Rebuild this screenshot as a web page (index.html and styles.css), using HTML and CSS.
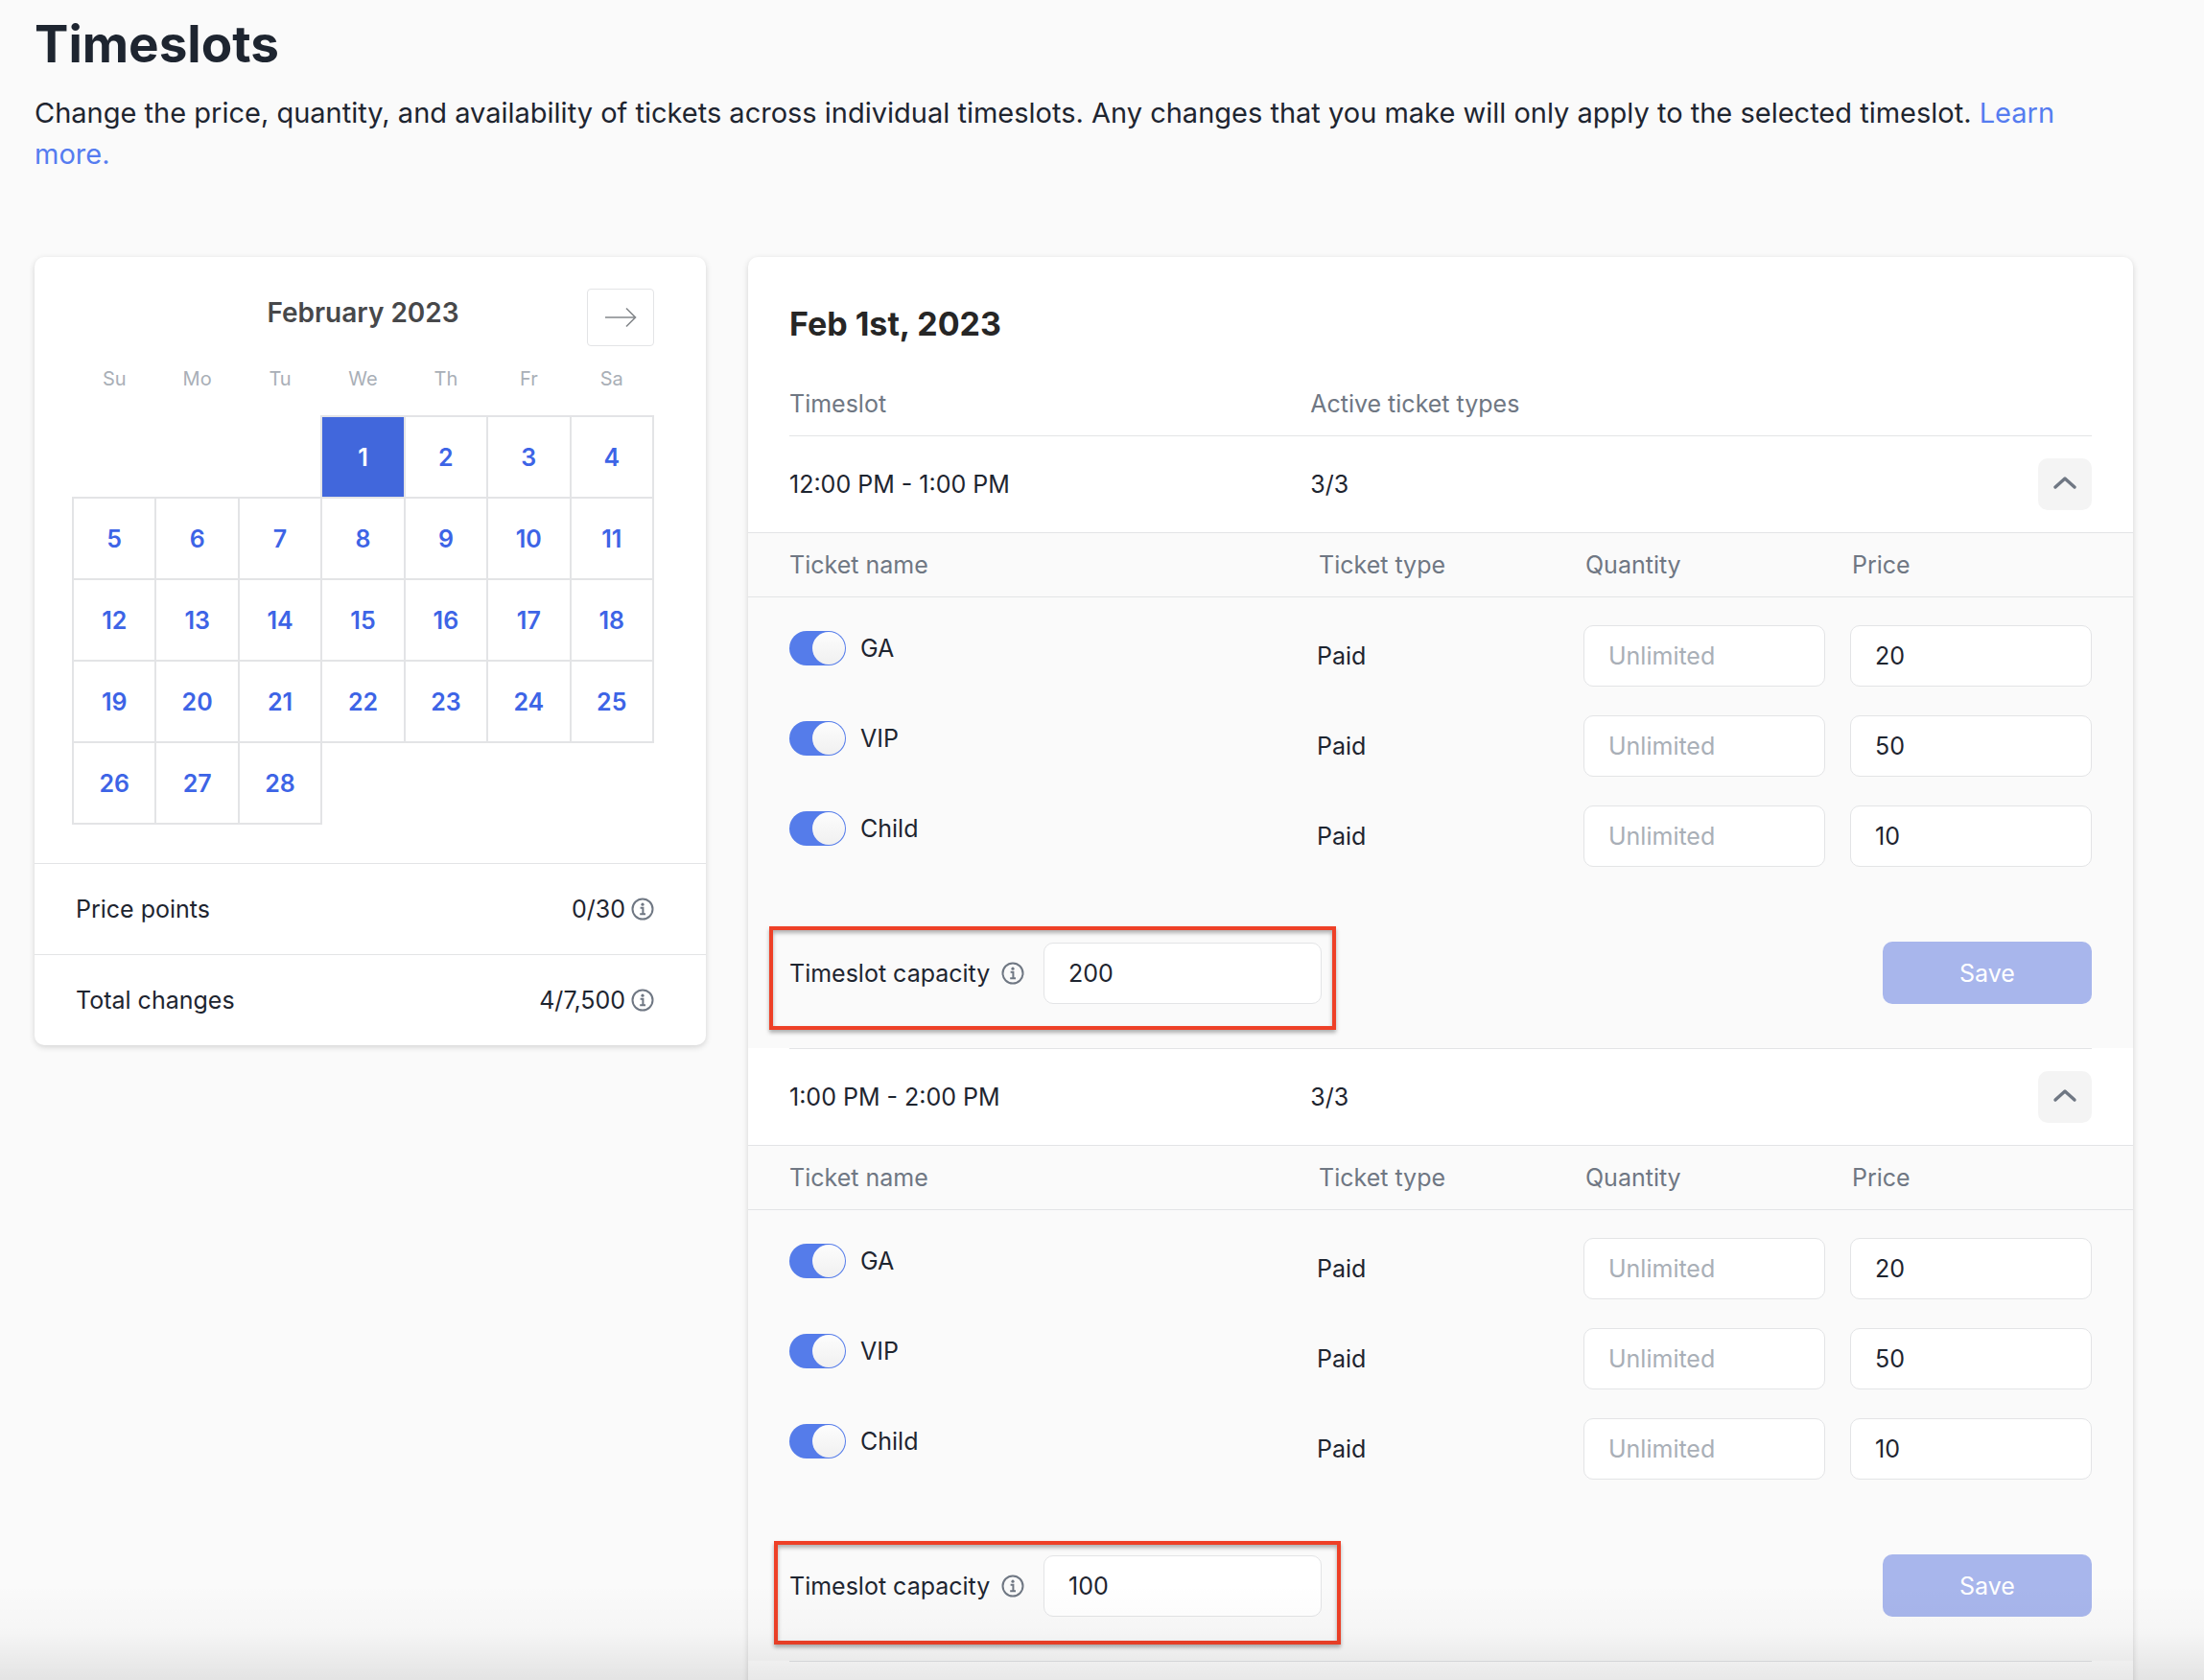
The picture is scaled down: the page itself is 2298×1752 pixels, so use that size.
FILE: index.html
```html
<!DOCTYPE html>
<html lang="en">
<head>
<meta charset="utf-8">
<meta name="viewport" content="width=device-width, initial-scale=1">
<title>Timeslots</title>
<link rel="stylesheet" href="styles.css">
</head>
<body>
<svg class="sprite" aria-hidden="true">
  <symbol id="info" viewBox="0 0 24 24">
    <circle cx="12" cy="12" r="10.5" fill="none" stroke="currentColor" stroke-width="2"/>
    <circle cx="12" cy="7.2" r="1.6" fill="currentColor"/>
    <path d="M9.6 10.8H12.4V17M9.2 17.2H15" fill="none" stroke="currentColor" stroke-width="2"/>
  </symbol>
  <symbol id="chevron-up" viewBox="0 0 26 16">
    <path d="M3 13L13 4L23 13" fill="none" stroke="currentColor" stroke-width="3.4" stroke-linecap="round" stroke-linejoin="round"/>
  </symbol>
</svg>
<main class="page">
  <header class="intro">
    <h1 class="intro-title">Timeslots</h1>
    <p class="intro-text">Change the price, quantity, and availability of tickets across individual timeslots. Any changes that you make will only apply to the selected timeslot. <a class="link" href="#">Learn more.</a></p>
  </header>
  <div class="columns">
    <aside class="card sidebar">
      <div class="month-bar">
        <h2 class="month">February 2023</h2>
        <button class="next" type="button" aria-label="Next month">
          <svg width="34" height="22" viewBox="0 0 34 22" fill="none" stroke="currentColor" stroke-width="1.6"><path d="M1 11H32M23 1.5L32.500 11L23 20.500"/></svg>
        </button>
      </div>
      <table class="calendar">
        <thead><tr><th>Su</th><th>Mo</th><th>Tu</th><th>We</th><th>Th</th><th>Fr</th><th>Sa</th></tr></thead>
        <tbody>
          <tr><td class="blank"></td><td class="blank"></td><td class="blank"></td><td class="selected">1</td><td>2</td><td>3</td><td>4</td></tr>
          <tr><td>5</td><td>6</td><td>7</td><td>8</td><td>9</td><td>10</td><td>11</td></tr>
          <tr><td>12</td><td>13</td><td>14</td><td>15</td><td>16</td><td>17</td><td>18</td></tr>
          <tr><td>19</td><td>20</td><td>21</td><td>22</td><td>23</td><td>24</td><td>25</td></tr>
          <tr><td>26</td><td>27</td><td>28</td><td class="blank"></td><td class="blank"></td><td class="blank"></td><td class="blank"></td></tr>
        </tbody>
      </table>
      <dl class="stats">
        <div class="stat"><dt>Price points</dt><dd>0/30<svg class="info"><use href="#info"/></svg></dd></div>
        <div class="stat"><dt>Total changes</dt><dd>4/7,500<svg class="info"><use href="#info"/></svg></dd></div>
      </dl>
    </aside>

    <section class="card slots">
      <h2 class="date">Feb 1st, 2023</h2>
      <div class="slot-grid slot-head"><span>Timeslot</span><span>Active ticket types</span></div>

      <article class="slot">
        <div class="slot-grid slot-row">
          <span>12:00 PM - 1:00 PM</span><span>3/3</span>
          <button class="collapse" type="button" aria-label="Collapse 12:00 PM timeslot"><svg class="chevron"><use href="#chevron-up"/></svg></button>
        </div>
        <div class="panel">
          <table class="tickets">
            <colgroup><col><col class="col-type"><col class="col-quantity"><col class="col-price"></colgroup>
            <thead><tr><th>Ticket name</th><th>Ticket type</th><th>Quantity</th><th>Price</th></tr></thead>
            <tbody>
              <tr><td><label class="toggle-label"><input class="toggle" type="checkbox" checked>GA</label></td><td>Paid</td><td><input class="field" type="text" placeholder="Unlimited" aria-label="GA quantity"></td><td><input class="field" type="text" value="20" aria-label="GA price"></td></tr>
              <tr><td><label class="toggle-label"><input class="toggle" type="checkbox" checked>VIP</label></td><td>Paid</td><td><input class="field" type="text" placeholder="Unlimited" aria-label="VIP quantity"></td><td><input class="field" type="text" value="50" aria-label="VIP price"></td></tr>
              <tr><td><label class="toggle-label"><input class="toggle" type="checkbox" checked>Child</label></td><td>Paid</td><td><input class="field" type="text" placeholder="Unlimited" aria-label="Child quantity"></td><td><input class="field" type="text" value="10" aria-label="Child price"></td></tr>
            </tbody>
          </table>
          <div class="panel-foot">
            <div class="capacity capacity-first">
              <label class="capacity-label" for="capacity-12">Timeslot capacity</label>
              <svg class="info"><use href="#info"/></svg>
              <input class="field capacity-field" id="capacity-12" type="text" value="200">
            </div>
            <button class="save" type="button">Save</button>
          </div>
        </div>
      </article>

      <article class="slot">
        <div class="slot-grid slot-row">
          <span>1:00 PM - 2:00 PM</span><span>3/3</span>
          <button class="collapse" type="button" aria-label="Collapse 1:00 PM timeslot"><svg class="chevron"><use href="#chevron-up"/></svg></button>
        </div>
        <div class="panel">
          <table class="tickets">
            <colgroup><col><col class="col-type"><col class="col-quantity"><col class="col-price"></colgroup>
            <thead><tr><th>Ticket name</th><th>Ticket type</th><th>Quantity</th><th>Price</th></tr></thead>
            <tbody>
              <tr><td><label class="toggle-label"><input class="toggle" type="checkbox" checked>GA</label></td><td>Paid</td><td><input class="field" type="text" placeholder="Unlimited" aria-label="GA quantity"></td><td><input class="field" type="text" value="20" aria-label="GA price"></td></tr>
              <tr><td><label class="toggle-label"><input class="toggle" type="checkbox" checked>VIP</label></td><td>Paid</td><td><input class="field" type="text" placeholder="Unlimited" aria-label="VIP quantity"></td><td><input class="field" type="text" value="50" aria-label="VIP price"></td></tr>
              <tr><td><label class="toggle-label"><input class="toggle" type="checkbox" checked>Child</label></td><td>Paid</td><td><input class="field" type="text" placeholder="Unlimited" aria-label="Child quantity"></td><td><input class="field" type="text" value="10" aria-label="Child price"></td></tr>
            </tbody>
          </table>
          <div class="panel-foot">
            <div class="capacity capacity-second">
              <label class="capacity-label" for="capacity-1">Timeslot capacity</label>
              <svg class="info"><use href="#info"/></svg>
              <input class="field capacity-field" id="capacity-1" type="text" value="100">
            </div>
            <button class="save" type="button">Save</button>
          </div>
        </div>
      </article>
      <div class="slot-grid slot-row"></div>
    </section>
  </div>
  <div class="fade"></div>
</main>
</body>
</html>
```
FILE: styles.css
```css
:root {
  --ink: #1e2530;
  --muted: #6f7783;
  --faint: #a9afb7;
  --line: #e3e4e6;
  --blue: #3d64e6;
}

*,
*::before,
*::after {
  box-sizing: border-box;
}

body {
  margin: 0;
  background: #fafafa;
  color: var(--ink);
  font: 25px/32px Inter, "Liberation Sans", sans-serif;
}

h1, h2, p, dl, dd {
  margin: 0;
}

button, input {
  margin: 0;
  color: inherit;
  font: inherit;
}

.sprite {
  display: none;
}

/* The page fills the window; the slot list runs on past its lower edge. */
.page {
  position: relative;
  display: flex;
  flex-direction: column;
  height: 100vh;
  padding: 14px 74px 0 36px;
  overflow: hidden;
}

.intro {
  margin-bottom: 86px;
}

.intro-title {
  margin-bottom: 18px;
  font-size: 53px;
  font-weight: 700;
  line-height: 64px;
}

.intro-text {
  font-size: 29px;
  line-height: 43px;
}

.link {
  color: #557cf0;
  text-decoration: none;
}

.columns {
  display: flex;
  flex: none;
  align-items: flex-start;
  gap: 44px;
}

.card {
  background: #fff;
  border-radius: 10px;
  box-shadow: 0 2px 6px rgba(0, 0, 0, 0.16);
}

.info {
  flex: none;
  width: 24px;
  height: 24px;
  color: var(--muted);
}

/* Calendar */
.sidebar {
  flex: 0 0 700px;
}

.month-bar {
  display: grid;
  grid-template-columns: 70px 1fr 70px;
  margin: 33px 54px 0 39px;
}

.month {
  grid-column: 2;
  color: #47484a;
  font-size: 28px;
  font-weight: 600;
  line-height: 50px;
  text-align: center;
}

.next {
  display: flex;
  align-items: center;
  justify-content: center;
  height: 60px;
  padding: 0;
  background: #fff;
  border: 1px solid var(--line);
  border-radius: 4px;
  color: #84888c;
}

.calendar {
  width: 607px;
  margin: 7px 0 0 39px;
  border-collapse: collapse;
  table-layout: fixed;
}

.calendar th {
  height: 66px;
  padding: 0 0 12px;
  color: var(--faint);
  font-size: 20px;
  font-weight: 400;
}

.calendar td {
  height: 85px;
  padding: 0;
  border: 2px solid var(--line);
  color: var(--blue);
  font-weight: 600;
  text-align: center;
}

.calendar .blank {
  border: 0;
}

.calendar .selected {
  background: #4167dc;
  color: #fff;
}

.stats {
  margin-top: 40px;
}

.stat {
  display: flex;
  align-items: center;
  justify-content: space-between;
  height: 95px;
  padding: 0 54px 0 43px;
  border-top: 1px solid var(--line);
}

.stat dd {
  display: flex;
  align-items: center;
  gap: 6px;
}

/* Timeslots */
.slots {
  flex: 1;
  min-width: 0;
}

.date {
  padding: 48px 43px 0;
  color: #262626;
  font-size: 34px;
  font-weight: 700;
  line-height: 44px;
}

.slot-grid {
  display: grid;
  grid-template-columns: 2fr 3fr;
  align-items: center;
  margin: 0 43px;
}

.slot-head {
  height: 94px;
  padding-top: 28px;
  color: var(--muted);
}

.slot-row {
  grid-template-columns: 40% 1fr 56px;
  height: 101px;
  border-top: 1px solid var(--line);
}

.collapse {
  display: flex;
  align-items: center;
  justify-content: center;
  height: 54px;
  padding: 0 0 4px;
  background: #f4f4f4;
  border: 0;
  border-radius: 10px;
  color: var(--muted);
}

.chevron {
  width: 26px;
  height: 16px;
}

.panel {
  background: #fafafa;
}

.tickets {
  width: 100%;
  border-spacing: 0;
  table-layout: fixed;
}

.col-type {
  width: 278px;
}

.col-quantity {
  width: 278px;
}

.col-price {
  width: 295px;
}

.tickets th {
  height: 68px;
  padding: 0 0 0 2px;
  border: solid var(--line);
  border-width: 1px 0;
  color: var(--muted);
  font-weight: 400;
  text-align: left;
}

.tickets tbody::before {
  display: block;
  height: 14px;
  content: "";
}

.tickets td {
  height: 94px;
  padding: 0;
}

.tickets th:first-child,
.tickets td:first-child {
  padding-left: 43px;
}

.tickets td:first-child {
  padding-bottom: 16px;
}

.tickets td:nth-child(3) {
  padding-right: 26px;
}

.tickets td:last-child {
  padding-right: 43px;
}

.toggle-label {
  display: flex;
  align-items: center;
  gap: 15px;
}

.toggle {
  display: flex;
  justify-content: flex-end;
  width: 59px;
  height: 36px;
  padding: 1px;
  appearance: none;
  background: #557cea;
  border-radius: 18px;
}

.toggle::before {
  width: 34px;
  height: 34px;
  background: linear-gradient(#fdfdfd, #f0f0f0);
  border-radius: 50%;
  content: "";
}

.field {
  display: block;
  width: 100%;
  height: 64px;
  padding: 0 25px;
  background: #fff;
  border: 1px solid var(--line);
  border-radius: 10px;
}

.field::placeholder {
  color: var(--faint);
  opacity: 1;
}

.panel-foot {
  display: flex;
  align-items: center;
  justify-content: space-between;
  padding: 63px 43px 46px;
}

.capacity {
  position: relative;
  display: flex;
  align-items: center;
}

.capacity-label {
  width: 221px;
  white-space: nowrap;
}

.capacity-field {
  width: 290px;
  margin-left: 20px;
}

/* Red callout frames drawn over the capacity controls */
.capacity::after {
  position: absolute;
  width: 591px;
  height: 108px;
  border: 4px solid #ee4027;
  box-shadow: 0 3px 4px rgba(0, 0, 0, 0.3), inset 0 3px 4px rgba(0, 0, 0, 0.3);
  content: "";
  pointer-events: none;
}

.capacity-first::after {
  top: -17px;
  left: -21px;
}

.capacity-second::after {
  top: -15px;
  left: -16px;
}

.save {
  width: 218px;
  height: 65px;
  background: #a8b6ec;
  border: 0;
  border-radius: 10px;
  color: #fff;
}

/* Shade along the lower edge of the window */
.fade {
  position: absolute;
  right: 0;
  bottom: 0;
  left: 0;
  height: 100px;
  background: linear-gradient(rgba(0, 0, 0, 0), rgba(0, 0, 0, 0.02) 50%, rgba(0, 0, 0, 0.09));
  pointer-events: none;
}
```
